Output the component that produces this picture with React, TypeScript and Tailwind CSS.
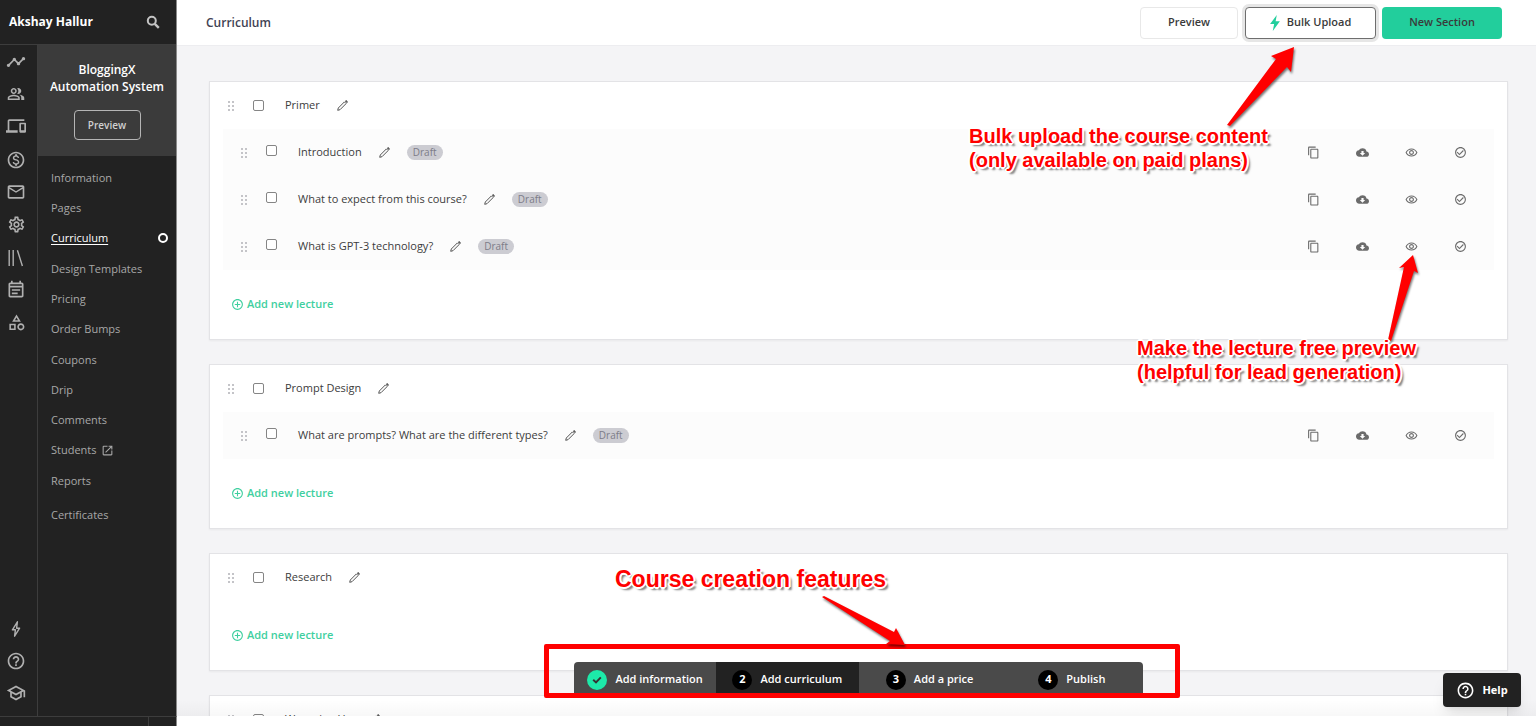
import type { ReactNode } from 'react'
import {
  MdAddCircleOutline,
  MdCheckCircleOutline,
  MdCloudDownload,
  MdContentCopy,
  MdDevices,
  MdHelpOutline,
  MdMailOutline,
  MdOpenInNew,
  MdOutlineCategory,
  MdOutlineEventNote,
  MdOutlineMonetizationOn,
  MdOutlinePeopleAlt,
  MdOutlineRemoveRedEye,
  MdOutlineSchool,
  MdOutlineSettings,
  MdTimeline,
} from 'react-icons/md'

const BOLT = 'M10.5 1 3 11h4.5L6 19l8-11H9.2z'

function LibraryIcon() {
  return (
    <svg viewBox="0 0 18 18" className="size-[18px]" fill="none" stroke="currentColor" strokeWidth="1.4">
      <path d="M2.2 1v16M6.2 1v16M10.4 1.2 15.4 17" />
    </svg>
  )
}

function BoltOutline() {
  return (
    <svg viewBox="0 0 18 18" className="size-[18px]" fill="none" stroke="currentColor" strokeWidth="1.4" strokeLinejoin="round">
      <path d="M10.4 1.8 5.4 9.8h3L7.6 16.2l5-8H9.6z" />
    </svg>
  )
}

const RAIL: { label: string; icon: ReactNode }[][] = [
  [
    { label: 'Dashboard', icon: <MdTimeline size={20} /> },
    { label: 'Users', icon: <MdOutlinePeopleAlt size={18} /> },
    { label: 'Site', icon: <MdDevices size={20} /> },
  ],
  [
    { label: 'Sales', icon: <MdOutlineMonetizationOn size={20} /> },
    { label: 'Emails', icon: <MdMailOutline size={20} /> },
    { label: 'Settings', icon: <MdOutlineSettings size={19} /> },
  ],
  [
    { label: 'Library', icon: <LibraryIcon /> },
    { label: 'Calendar', icon: <MdOutlineEventNote size={20} /> },
    { label: 'Apps', icon: <MdOutlineCategory size={19} /> },
  ],
]

const RAIL_BOTTOM: { label: string; icon: ReactNode }[] = [
  { label: 'Updates', icon: <BoltOutline /> },
  { label: 'Support', icon: <MdHelpOutline size={20} /> },
  { label: 'School', icon: <MdOutlineSchool size={20} /> },
]

const NAV = [
  ['Information', 'Pages', 'Curriculum'],
  ['Design Templates', 'Pricing', 'Order Bumps'],
  ['Coupons', 'Drip', 'Comments', 'Students'],
  ['Reports'],
]

const SECTIONS = [
  {
    title: 'Primer',
    lectures: ['Introduction', 'What to expect from this course?', 'What is GPT-3 technology?'],
  },
  { title: 'Prompt Design', lectures: ['What are prompts? What are the different types?'] },
  { title: 'Research', lectures: [] },
  { title: 'Wrapping Up', lectures: [] },
]

const STEPS = ['Add information', 'Add curriculum', 'Add a price', 'Publish']

function RailButton({ label, icon }: { label: string; icon: ReactNode }) {
  return (
    <button type="button" aria-label={label} className="flex h-8 w-8 items-center justify-center">
      {icon}
    </button>
  )
}

function NavLink({ label }: { label: string }) {
  const active = label === 'Curriculum'
  return (
    <li>
      <a
        href="#"
        className={`flex h-[30px] items-center gap-1 pr-2 pl-[13px] ${active ? 'text-white' : 'text-[#a8a8a8]'}`}
      >
        <span className={active ? 'underline underline-offset-2' : ''}>{label}</span>
        {label === 'Students' && <MdOpenInNew size={13} />}
        {active && <span className="ml-auto size-2.5 rounded-full border-2 border-white" />}
      </a>
    </li>
  )
}

function Sidebar() {
  return (
    <aside className="flex w-[177px] shrink-0 flex-col border-r border-[#8a8a8a] bg-[#222]">
      <div className="flex h-[45px] shrink-0 items-center justify-between border-b border-[#3d3d3d] pr-4 pl-[9px] text-white">
        <span className="text-[12px] font-bold">Akshay Hallur</span>
        <button type="button" aria-label="Search" className="text-[#c4c4c4]">
          <svg viewBox="0 0 14 14" className="size-3.5" fill="none" stroke="currentColor" strokeWidth="2">
            <circle cx="5.8" cy="5.8" r="4" />
            <path d="m8.8 8.8 4 4" strokeWidth="2.4" />
          </svg>
        </button>
      </div>
      <div className="flex min-h-0 flex-1">
        <div className="flex w-[38px] shrink-0 flex-col items-start justify-between border-r border-[#3d3d3d] pb-[7px] text-[#b0b0b0]">
          <div className="flex flex-col gap-0.5 pt-px">
            {RAIL.map((group, i) => (
              <div key={i}>
                {group.map(item => <RailButton key={item.label} {...item} />)}
              </div>
            ))}
          </div>
          <div>
            {RAIL_BOTTOM.map(item => <RailButton key={item.label} {...item} />)}
          </div>
        </div>
        <div className="flex-1">
          <div className="flex h-[111px] flex-col items-center bg-[#3b3b3b] pt-4 text-center">
            <h2 className="text-[12px] leading-[17px] font-semibold text-white">
              BloggingX<br />Automation System
            </h2>
            <button type="button" className="mt-[15px] h-[30px] w-[67px] rounded border border-[#b5b5b5] text-[10px] font-semibold text-[#d0d0d0]">
              Preview
            </button>
          </div>
          <nav className="flex flex-col gap-px pt-[7px] text-[11px]">
            {NAV.map(group => (
              <ul key={group[0]}>
                {group.map(label => <NavLink key={label} label={label} />)}
              </ul>
            ))}
            <ul className="mt-[3px]">
              <NavLink label="Certificates" />
            </ul>
          </nav>
        </div>
      </div>
    </aside>
  )
}

function DragHandle() {
  return (
    <svg viewBox="0 0 6 10" className="h-2.5 w-1.5 shrink-0 fill-[#c4c4c8]">
      {[0, 4, 8].map(y => (
        <g key={y}>
          <rect x="0" y={y} width="2" height="2" />
          <rect x="4" y={y} width="2" height="2" />
        </g>
      ))}
    </svg>
  )
}

function Tick({ label, className }: { label: string; className: string }) {
  return (
    <input
      type="checkbox"
      aria-label={label}
      className={`size-[11px] shrink-0 appearance-none rounded-[2px] border border-[#858585] bg-white ${className}`}
    />
  )
}

function EditButton({ label }: { label: string }) {
  return (
    <button type="button" aria-label={`Edit ${label}`} className="ml-[17px] text-[#555]">
      <svg viewBox="0 0 11 11" className="size-[11px]" fill="none" stroke="currentColor" strokeWidth="1" strokeLinejoin="round">
        <path d="M.7 10.3 1.3 8 7.4 1.9 9.1 3.6 3 9.7z" />
        <path d="M8.4 1.1 9.2.5l1.3 1.3-.6.8z" fill="currentColor" />
      </svg>
    </button>
  )
}

function Lecture({ title }: { title: string }) {
  return (
    <li className="flex h-[47px] items-center bg-[#fcfcfc] pr-[9px] pl-[18px]">
      <DragHandle />
      <Tick label={title} className="mr-[21px] mb-1 ml-[19px]" />
      <span>{title}</span>
      <EditButton label={title} />
      <span className="ml-[17px] flex h-[15px] w-9 items-center justify-center rounded-full bg-[#ccccd2] text-[10px] text-[#7c7c88]">
        Draft
      </span>
      <div className="ml-auto grid grid-cols-4 text-[#6b6b6b]">
        <button type="button" aria-label="Duplicate" className="flex w-[49px] justify-center"><MdContentCopy size={13} /></button>
        <button type="button" aria-label="Download" className="flex w-[49px] justify-center"><MdCloudDownload size={13} /></button>
        <button type="button" aria-label="Free preview" className="flex w-[49px] justify-center"><MdOutlineRemoveRedEye size={13} /></button>
        <button type="button" aria-label="Publish" className="flex w-[49px] justify-center"><MdCheckCircleOutline size={13} /></button>
      </div>
    </li>
  )
}

function SectionCard({ title, lectures }: { title: string; lectures: string[] }) {
  return (
    <section className="border border-[#e3e3e6] bg-white px-[13px] text-[11px] text-[#3c3c3c] shadow-xs">
      <div className="flex h-[47px] items-center pl-[5px]">
        <DragHandle />
        <Tick label={title} className="mr-[21px] ml-[19px]" />
        <h3>{title}</h3>
        <EditButton label={title} />
      </div>
      <ul>
        {lectures.map(l => <Lecture key={l} title={l} />)}
      </ul>
      <div className="flex h-[69px] items-center pl-2">
        <button type="button" className="flex items-center gap-[3px] font-semibold text-[#3fcf9f]">
          <MdAddCircleOutline size={13} />
          Add new lecture
        </button>
      </div>
    </section>
  )
}

function StepBar() {
  return (
    <ol className="grid h-[31px] w-[569px] grid-cols-4 overflow-hidden rounded-t bg-[#4a4a4a] text-[11px] font-semibold text-white">
      {STEPS.map((step, i) => (
        <li key={step} className={`flex items-center justify-center gap-2 pt-1 ${i === 1 ? 'bg-[#222]' : ''}`}>
          {i === 0 ? (
            <span className="flex size-5 items-center justify-center rounded-full bg-[#1de9a9] text-[#333]">
              <svg viewBox="0 0 10 10" className="size-2.5" fill="none" stroke="currentColor" strokeWidth="2">
                <path d="m1.2 4.8 2.8 2.6L8.8 2.4" />
              </svg>
            </span>
          ) : (
            <span className="flex size-5 items-center justify-center rounded-full bg-black font-bold">{i + 1}</span>
          )}
          {step}
        </li>
      ))}
    </ol>
  )
}

const NOTE =
  'absolute whitespace-nowrap font-bold text-[#f00] font-["Liberation_Sans",Arial,sans-serif] [text-shadow:-2px_0_#fff,2px_0_#fff,0_-2px_#fff,0_2px_#fff,-1px_-1px_#fff,1px_1px_#fff,-1px_1px_#fff,1px_-1px_#fff,3px_3px_2px_#777]'

function Arrow({ points, className, viewBox }: { points: string; className: string; viewBox: string }) {
  return (
    <svg viewBox={viewBox} className={`absolute fill-[#f00] drop-shadow-[1px_2px_1px_#0008] ${className}`} aria-hidden>
      <polygon points={points} />
    </svg>
  )
}

function Notes() {
  return (
    <div className="pointer-events-none absolute inset-0">
      <Arrow
        viewBox="0 0 70 82"
        className="top-[46px] right-[240px] h-[82px] w-[70px]"
        points="68,1 45,10 50,13 1,79 4,80 61,21 65,26"
      />
      <p className={`${NOTE} top-[124px] right-[264px] w-[303px] text-[20px] leading-6`}>
        Bulk upload the course content<br />(only available on paid plans)
      </p>
      <Arrow
        viewBox="0 0 34 88"
        className="top-[254px] right-[116px] h-[88px] w-[34px]"
        points="27,1 13,14 18,13 2,86 5,87 28,17 32,19"
      />
      <p className={`${NOTE} top-[336px] right-[112px] w-[287px] text-[20px] leading-6`}>
        Make the lecture free preview<br />(helpful for lead generation)
      </p>
    </div>
  )
}

export default function App() {
  return (
    <div className='flex h-screen flex-col bg-white font-["Open_Sans","Noto_Sans",sans-serif]'>
      <div className="flex min-h-0 flex-1">
        <Sidebar />
        <main className="relative flex min-w-0 flex-1 flex-col overflow-hidden bg-[#f4f4f6]">
          <header className="flex h-[46px] shrink-0 items-center border-b border-[#ededf0] bg-white pr-[34px] pl-[29px] text-[11px] font-semibold text-[#3a3a3a]">
            <h1 className="mr-auto text-[12px] text-[#3f4254]">Curriculum</h1>
            <button type="button" className="mr-[7px] h-8 w-[98px] rounded border border-[#e8e8e8] bg-white">Preview</button>
            <button type="button" className="mr-1.5 flex h-8 w-[131px] items-center justify-center gap-[7px] rounded border border-[#6e6e6e] bg-white ring-3 ring-[#e6e6e6]">
              <svg viewBox="3 1 11 18" className="h-4 w-2.5 fill-[#22ce9c]"><path d={BOLT} /></svg>
              Bulk Upload
            </button>
            <button type="button" className="h-8 w-[120px] rounded bg-[#22ce9c]">New Section</button>
          </header>
          <div className="flex min-h-0 flex-1 flex-col overflow-hidden pt-[35px] pr-7 pl-8">
            <div className="flex flex-col gap-6">
              {SECTIONS.map(s => <SectionCard key={s.title} {...s} />)}
            </div>
          </div>

          <div className="absolute inset-x-0 bottom-0 h-4 bg-linear-to-t from-black/3 to-transparent" />

          {/* course setup steps, pinned to the bottom */}
          <div className="absolute inset-x-0 bottom-[18px] flex justify-center pl-[11px]">
            <div className="relative rounded-xs border-5 border-[#f00] pt-[13px] pr-8 pl-[25px]">
              <StepBar />
              <p className={`${NOTE} -top-[84px] left-[66px] text-[23px] leading-7`}>Course creation features</p>
              <Arrow
                viewBox="0 0 86 52"
                className="-top-[54px] left-[272px] h-[52px] w-[86px]"
                points="1,2 3,1 73,37 75,33 84,50 65,49 69,46"
              />
            </div>
          </div>

          <button type="button" className="absolute right-[15px] bottom-[9px] flex h-[34px] w-[78px] items-center justify-center gap-[7px] rounded bg-[#222] text-[11px] font-bold text-white shadow-lg">
            <MdHelpOutline size={19} />
            Help
          </button>

          <Notes />
        </main>
      </div>
      <footer className="flex h-2.5 shrink-0">
        <div className="flex w-[177px] border-t border-r border-t-[#3d3d3d] border-r-[#8a8a8a] bg-[#222]">
          <div className="w-[149px] border-r border-[#3d3d3d]" />
        </div>
      </footer>
    </div>
  )
}
